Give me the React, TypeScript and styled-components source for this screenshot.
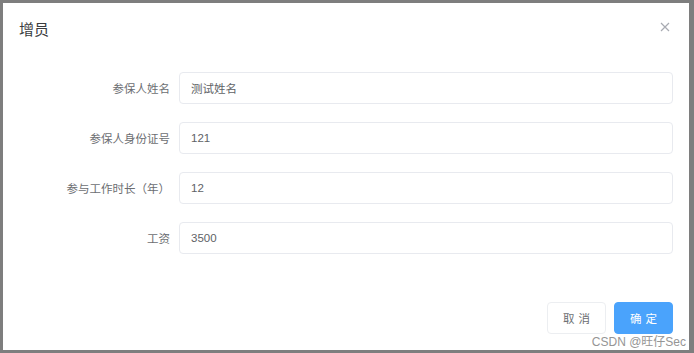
import React from "react";
import styled, { createGlobalStyle } from "styled-components";

const Global = createGlobalStyle`
  html, body { margin: 0; padding: 0; }
  body {
    background: #7e7e7e;
    font-family: "Liberation Sans", "Noto Sans CJK SC", sans-serif;
    width: 694px;
    height: 353px;
    overflow: hidden;
  }
  #root { width: 694px; height: 353px; }
`;

const Page = styled.div`
  position: relative;
  box-sizing: border-box;
  width: 694px;
  height: 353px;
  padding: 3px 5px 3px 3px;
`;

const Dialog = styled.div`
  box-sizing: border-box;
  height: 100%;
  background: #ffffff;
  display: flex;
  flex-direction: column;
`;

const Header = styled.div`
  display: flex;
  justify-content: space-between;
  align-items: flex-start;
  padding: 16px 19px 0 16px;
  height: 38px;
  box-sizing: border-box;
`;

const Title = styled.div`
  font-size: 15px;
  line-height: 22px;
  color: #3a3c40;
`;

const Close = styled.button`
  border: none;
  background: transparent;
  padding: 0;
  margin-top: 3px;
  width: 10px;
  height: 10px;
  display: flex;
  cursor: pointer;
`;

const Form = styled.div`
  display: flex;
  flex-direction: column;
  gap: 18px;
  padding: 31px 16px 0 47px;
`;

const Row = styled.div`
  display: flex;
  align-items: center;
`;

const Label = styled.label`
  width: 120px;
  padding-right: 9px;
  box-sizing: content-box;
  text-align: right;
  font-size: 11.5px;
  color: #6c6e72;
  white-space: nowrap;
`;

const Input = styled.input`
  flex: 1;
  box-sizing: border-box;
  height: 32px;
  border: 1px solid #e8eaef;
  border-radius: 4px;
  padding: 0 11px;
  font-family: "Liberation Sans", "Noto Sans CJK SC", sans-serif;
  font-size: 11.5px;
  color: #606266;
  outline: none;
`;

const Footer = styled.div`
  margin-top: auto;
  display: flex;
  justify-content: flex-end;
  gap: 8px;
  padding: 0 16px 16px 0;
`;

const Button = styled.button<{ $primary?: boolean }>`
  width: 59px;
  height: 32px;
  box-sizing: border-box;
  border-radius: 4px;
  border: 1px solid ${(p) => (p.$primary ? "#4aa3fc" : "#eceef1")};
  background: ${(p) => (p.$primary ? "#4aa3fc" : "#ffffff")};
  color: ${(p) => (p.$primary ? "#ffffff" : "#6c6e72")};
  font-family: "Liberation Sans", "Noto Sans CJK SC", sans-serif;
  font-size: 11.5px;
  letter-spacing: 4px;
  padding: 0 0 0 4px;
`;

const Watermark = styled.div`
  position: absolute;
  right: 8px;
  bottom: 4px;
  font-size: 12px;
  line-height: 14px;
  color: #959595;
  text-shadow: 0 0 2px #fff, 0 0 1px #fff;
  pointer-events: none;
`;

const fields = [
  { label: "参保人姓名", value: "测试姓名" },
  { label: "参保人身份证号", value: "121" },
  { label: "参与工作时长（年）", value: "12" },
  { label: "工资", value: "3500" },
];

export default function App() {
  return (
    <>
      <Global />
      <Page>
        <Dialog>
          <Header>
            <Title>增员</Title>
            <Close aria-label="close">
              <svg width="10" height="10" viewBox="0 0 10 10">
                <path d="M1 1 L9 9 M9 1 L1 9" stroke="#a8abb2" strokeWidth="1.2" />
              </svg>
            </Close>
          </Header>
          <Form>
            {fields.map((f) => (
              <Row key={f.label}>
                <Label>{f.label}</Label>
                <Input defaultValue={f.value} />
              </Row>
            ))}
          </Form>
          <Footer>
            <Button>取消</Button>
            <Button $primary>确定</Button>
          </Footer>
        </Dialog>
        <Watermark>CSDN @旺仔Sec</Watermark>
      </Page>
    </>
  );
}
